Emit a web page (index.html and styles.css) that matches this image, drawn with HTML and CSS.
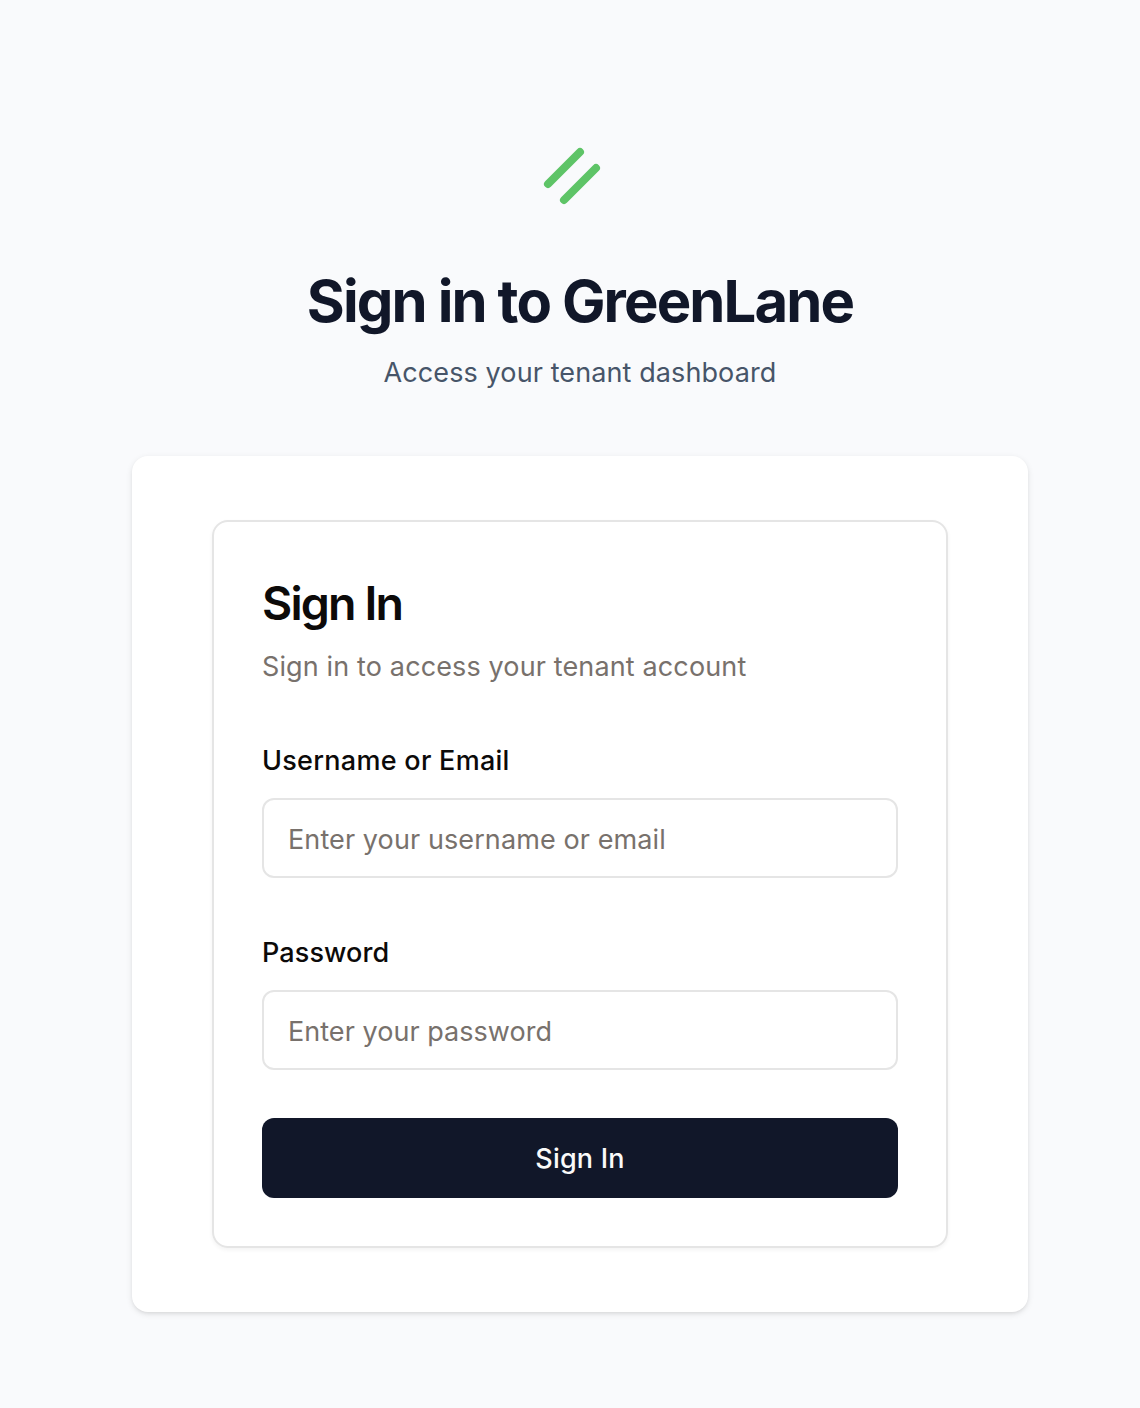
FILE: index.html
```html
<!DOCTYPE html>
<html lang="en">
<head>
<meta charset="utf-8">
<title>Sign in to GreenLane</title>
<link rel="stylesheet" href="styles.css">
</head>
<body>
<main class="page">
  <header class="intro">
    <svg class="logo" viewBox="0 0 64 64" fill="none" stroke="#5ec467" stroke-width="8" stroke-linecap="round" aria-hidden="true">
      <path d="M8 40 40 8M24 56 56 24"/>
    </svg>
    <h1 class="title">Sign in to GreenLane</h1>
    <p class="subtitle">Access your tenant dashboard</p>
  </header>
  <section class="panel">
    <form class="card">
      <h2 class="card-title">Sign In</h2>
      <p class="card-text">Sign in to access your tenant account</p>
      <label class="label" for="user">Username or Email</label>
      <input class="input" id="user" type="text" placeholder="Enter your username or email">
      <label class="label label-password" for="password">Password</label>
      <input class="input input-password" id="password" type="password" placeholder="Enter your password">
      <button class="button" type="button">Sign In</button>
    </form>
  </section>
</main>
</body>
</html>
```
FILE: styles.css
```css
* {
  box-sizing: border-box;
  margin: 0;
}

body {
  background: #f9fafc;
  font-family: Inter, "Liberation Sans", sans-serif;
  font-size: 27px;
  letter-spacing: .1px;
}

.page {
  min-height: 1408px;
  padding: 144px 112px 96px 132px;
}

.intro {
  display: flex;
  flex-direction: column;
  align-items: center;
}

.logo {
  width: 64px;
  height: 64px;
  margin-right: 16px;
}

.title {
  margin-top: 57px;
  color: #111729;
  font-size: 58px;
  line-height: 72px;
  font-weight: 700;
  letter-spacing: -1.87px;
}

.subtitle {
  margin-top: 16px;
  color: #475569;
  line-height: 40px;
}

.panel {
  margin-top: 63px;
  padding: 64px 80px;
  border-radius: 16px;
  background: #fff;
  box-shadow: 0 2px 6px rgba(0, 0, 0, .1), 0 2px 4px -2px rgba(0, 0, 0, .1);
}

.card {
  display: flex;
  flex-direction: column;
  padding: 49px 48px 48px;
  border: 2px solid #e5e5e5;
  border-radius: 16px;
  box-shadow: 0 2px 4px rgba(0, 0, 0, .05);
}

.card-title {
  color: #0c0a09;
  font-size: 46.5px;
  line-height: 64px;
  font-weight: 600;
  letter-spacing: -1.85px;
}

.card-text {
  margin-top: 12px;
  color: #78716c;
  line-height: 40px;
  letter-spacing: .13px;
}

.label {
  margin: 60px 0 23px;
  color: #0c0a09;
  line-height: 28px;
  font-weight: 500;
  letter-spacing: .28px;
}

.label-password {
  margin-top: 61px;
  letter-spacing: .1px;
}

.input {
  height: 80px;
  padding: 2px 24px 0;
  border: 2px solid #e5e5e5;
  border-radius: 12px;
  background: #fff;
  font: inherit;
  letter-spacing: inherit;
}

.input-password {
  letter-spacing: .04px;
}

.input::placeholder {
  color: #78716c;
}

.button {
  height: 80px;
  margin-top: 48px;
  padding: 0;
  border: 0;
  border-radius: 12px;
  background: #111729;
  color: #fafaf9;
  font: inherit;
  font-weight: 500;
  letter-spacing: .2px;
}
```
